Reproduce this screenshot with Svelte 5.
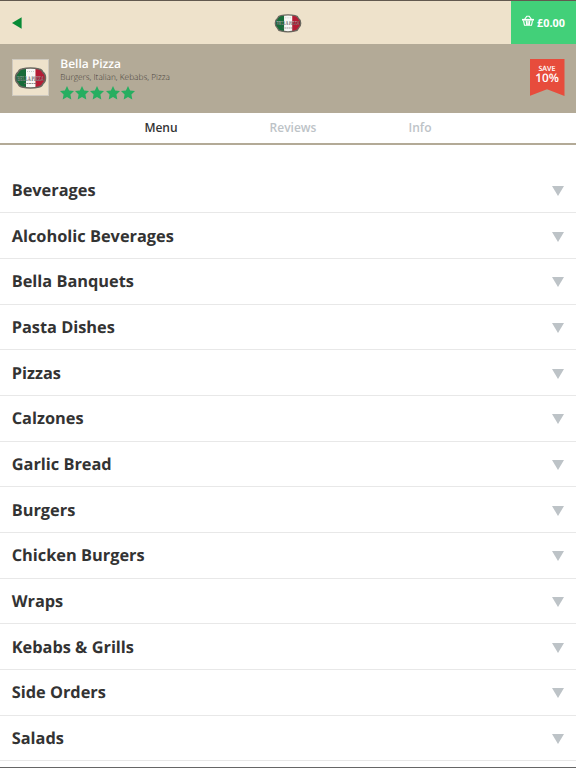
<script lang="ts">
  let active = $state('Menu');

  const tabs = ['Menu', 'Reviews', 'Info'];
  const stars = [0, 1, 2, 3, 4];
  const categories = [
    'Beverages',
    'Alcoholic Beverages',
    'Bella Banquets',
    'Pasta Dishes',
    'Pizzas',
    'Calzones',
    'Garlic Bread',
    'Burgers',
    'Chicken Burgers',
    'Wraps',
    'Kebabs & Grills',
    'Side Orders',
    'Salads',
  ];
</script>

{#snippet logo()}
  <svg class="logo" viewBox="0 0 66 44" aria-label="Bella Pizza">
    <defs>
      <clipPath id="badge">
        <path d="M16 4Q33 0 50 4Q56 5 58 11Q63 14 63 22Q63 30 58 33Q56 39 50 40Q33 44 16 40Q10 39 8 33Q3 30 3 22Q3 14 8 11Q10 5 16 4Z" />
      </clipPath>
    </defs>
    <g clip-path="url(#badge)">
      <rect width="24" height="44" fill="#176b39" />
      <rect x="24" width="19" height="44" fill="#f8f8f6" />
      <rect x="43" width="23" height="44" fill="#b51c35" />
    </g>
    <path
      d="M16 4Q33 0 50 4Q56 5 58 11Q63 14 63 22Q63 30 58 33Q56 39 50 40Q33 44 16 40Q10 39 8 33Q3 30 3 22Q3 14 8 11Q10 5 16 4Z"
      fill="none"
      stroke="#69675f"
      stroke-width="3"
    />
    <path d="M26 9h15" stroke="#b4bebb" stroke-width="1.5" stroke-dasharray="2 2" />
    <text x="33" y="27" text-anchor="middle" textLength="54" lengthAdjust="spacingAndGlyphs">BELLA PIZZA</text>
    <path d="M20 33h26" stroke="#706664" stroke-width="1.5" stroke-dasharray="4 1" />
  </svg>
{/snippet}

<div class="page">
  <header class="topbar">
    <button class="back" aria-label="Back">
      <svg viewBox="0 0 10 12" width="10" height="12"><path d="M0 6L9.6 0.2V11.8Z" fill="#078b36" /></svg>
    </button>
    <div class="brand">{@render logo()}</div>
    <button class="basket">
      <svg viewBox="0 0 24 22" width="12" height="11" fill="none" stroke="#fff" stroke-width="2.4">
        <path d="M5 9L10 2M19 9L14 2M9 2.5h6" />
        <path d="M0 9.5h24" stroke-width="3.4" />
        <path d="M3 11L5 20.5h14L21 11M8.5 11l1 9M15.5 11l-1 9M12 11v9" />
      </svg>
      <span>£0.00</span>
    </button>
  </header>

  <section class="restaurant">
    <div class="thumb">{@render logo()}</div>
    <div class="details">
      <h1>Bella Pizza</h1>
      <p>Burgers, Italian, Kebabs, Pizza</p>
      <div class="stars">
        {#each stars as star (star)}
          <svg viewBox="0 0 14 14"><path d="M7 0L9.1 4.5L14 5.1L10.4 8.5L11.3 13.4L7 11L2.7 13.4L3.6 8.5L0 5.1L4.9 4.5Z" /></svg>
        {/each}
      </div>
    </div>
    <div class="offer"><small>SAVE</small><strong>10%</strong></div>
  </section>

  <nav class="tabs">
    {#each tabs as tab (tab)}
      <button class:active={active === tab} onclick={() => (active = tab)}>{tab}</button>
    {/each}
  </nav>

  <ul class="categories">
    {#each categories as category (category)}
      <li>
        <span>{category}</span>
        <svg viewBox="0 0 12 10" width="12" height="10"><path d="M0 0H12L6 10Z" fill="#bdc3c7" /></svg>
      </li>
    {/each}
  </ul>
</div>

<style>
  :global(body) {
    margin: 0;
    background: #fff;
  }

  .page {
    box-sizing: border-box;
    height: 768px;
    overflow: hidden;
    border-top: 1px solid #62594f;
    border-bottom: 1px solid #666;
    font-family: 'Open Sans', sans-serif;
    text-rendering: geometricPrecision;
    color: #333;
  }

  button {
    padding: 0;
    border: 0;
    background: none;
    font: inherit;
    color: inherit;
  }

  .logo {
    display: block;
    width: 100%;
    overflow: visible;
  }

  .logo text {
    font: bold 14px 'Liberation Serif', serif;
    fill: #4c4e4c;
    stroke: #ddd;
    stroke-width: 0.3px;
  }

  .topbar {
    display: grid;
    grid-template-columns: 65px 1fr 65px;
    height: 43px;
    background: #eee2cb;
  }

  .back {
    display: flex;
    align-items: center;
    padding-left: 12px;
  }

  .brand {
    width: 28px;
    place-self: center;
    padding-top: 1px;
  }

  .basket {
    display: flex;
    align-items: center;
    justify-content: center;
    gap: 3px;
    background: #42d079;
    color: #fff;
    font-size: 10.8px;
    font-weight: 700;
  }

  .basket svg {
    margin-bottom: 4px;
  }

  .restaurant {
    display: flex;
    box-sizing: border-box;
    height: 69px;
    padding: 15px 11.5px 0 12px;
    background: #b3aa97;
  }

  .thumb {
    display: flex;
    align-items: center;
    box-sizing: border-box;
    width: 37px;
    height: 37px;
    padding: 1px;
    border: 1px solid #cfcac0;
    background: #eee2cb;
  }

  .details {
    flex: 1;
    margin-left: 11.3px;
  }

  h1 {
    margin: -4px 0 0;
    font-size: 12px;
    font-weight: 600;
    line-height: 17px;
    color: #fff;
  }

  p {
    margin: 0;
    font-size: 8.3px;
    font-weight: 300;
    line-height: 11px;
    color: #45413a;
  }

  .stars {
    display: flex;
    gap: 1.1px;
    margin-top: 2.5px;
  }

  .stars svg {
    width: 14px;
    height: 14px;
    fill: #27ae60;
  }

  .offer {
    display: flex;
    flex-direction: column;
    align-items: center;
    box-sizing: border-box;
    width: 35px;
    height: 37px;
    padding-top: 5px;
    background: #e74c3c;
    clip-path: polygon(0 0, 100% 0, 100% 100%, 50% 82%, 0 100%);
    color: #fff;
  }

  .offer small {
    font-size: 7.2px;
    font-weight: 600;
    line-height: 10px;
  }

  .offer strong {
    font-size: 11.8px;
    font-weight: 600;
    line-height: 8px;
  }

  .tabs {
    display: grid;
    grid-template-columns: 132px 132px 122px;
    justify-content: center;
    height: 30px;
    border-bottom: 2px solid #b3aa97;
    font-size: 12px;
    font-weight: 600;
    color: #bdc3c7;
  }

  .tabs button {
    padding-bottom: 2px;
  }

  .tabs .active {
    color: #333;
  }

  .categories {
    margin: 22.5px 0 0;
    padding: 0;
    list-style: none;
  }

  .categories li {
    display: flex;
    align-items: center;
    justify-content: space-between;
    box-sizing: border-box;
    height: 45.7px;
    padding: 0 12px 0 11.7px;
    border-bottom: 1px solid #e8e8e8;
    font-size: 16.35px;
    font-weight: 700;
  }

  .categories svg {
    margin-top: 2px;
  }
</style>
